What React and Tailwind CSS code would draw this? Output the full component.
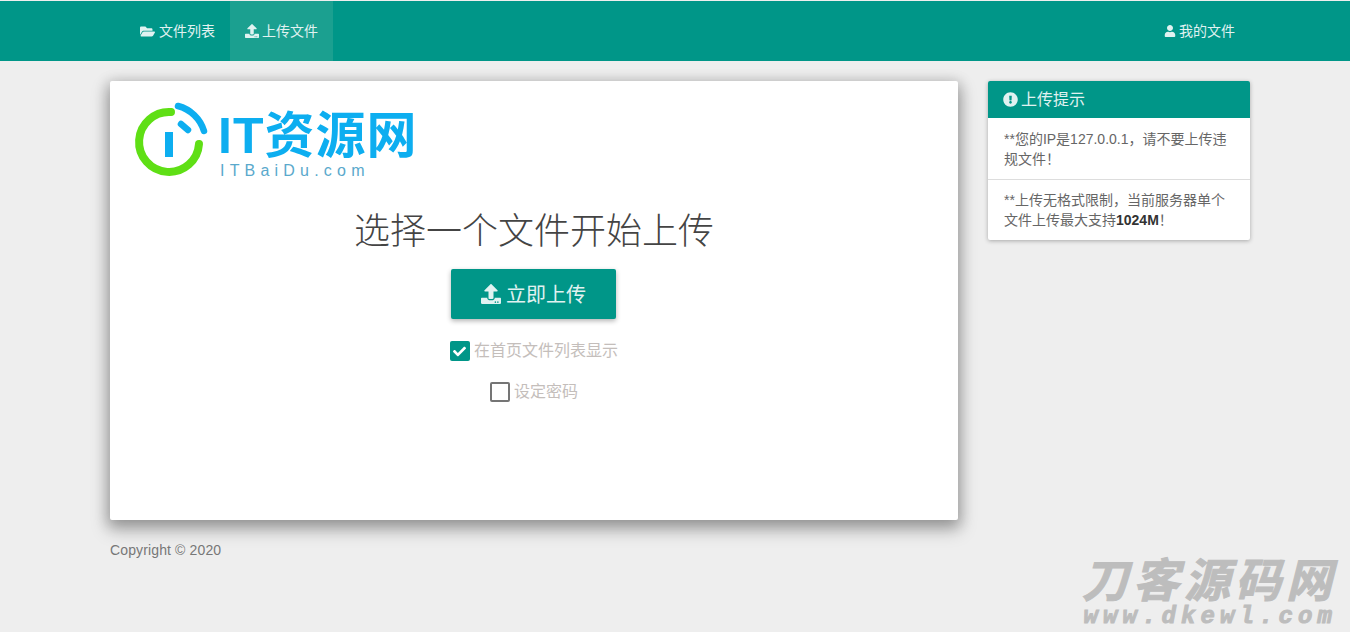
import { FaFolderOpen, FaUpload, FaUser, FaExclamationCircle, FaCheck } from 'react-icons/fa';

const sans = "font-['Liberation_Sans','Noto_Sans_CJK_SC',sans-serif]";

function Logo() {
  return (
    <div className="flex items-start h-[80px]">
      <svg width="80" height="80" viewBox="0 0 80 80" className="shrink-0">
        <path d="M41 15 A30 30 0 1 0 69 47" fill="none" stroke="#5fdf15" strokeWidth="8" strokeLinecap="round" />
        <path d="M48 9 A37 37 0 0 1 74 34" fill="none" stroke="#0daef0" strokeWidth="6.5" strokeLinecap="round" />
        <path d="M51 27 L58 33" fill="none" stroke="#0daef0" strokeWidth="6.5" strokeLinecap="round" />
        <rect x="35" y="35" width="8" height="25" fill="#0daef0" />
      </svg>
      <div className="ml-[8px] mt-[14px]">
        <div className={`${sans} text-[50px] leading-[50px] font-bold text-[#0daef0] tracking-[1px] whitespace-nowrap`}>IT资源网</div>
        <div className={`${sans} text-[16px] leading-[18px] text-[#5aa9cc] tracking-[5.2px] mt-[1px] ml-[2px]`}>ITBaiDu.com</div>
      </div>
    </div>
  );
}

function NavLink({ icon, label, active, gap }) {
  return (
    <a className={`flex items-center h-[60px] px-[15px] text-[14px] text-[#e0f2f1] ${active ? 'bg-[#1ba090]' : ''}`}>
      {icon}
      <span className={gap}>{label}</span>
    </a>
  );
}

export default function App() {
  return (
    <div className={`${sans} min-h-[632px] bg-[#eeeeee] pt-px relative overflow-hidden`}>
      {/* Navbar */}
      <nav className="h-[60px] bg-[#009688] flex justify-between pl-[125px] pr-[100px]">
        <div className="flex">
          <NavLink icon={<FaFolderOpen size={15} />} label="文件列表" gap="ml-[4px]" />
          <NavLink icon={<FaUpload size={14} />} label="上传文件" gap="ml-[3px]" active />
        </div>
        <NavLink icon={<FaUser size={12} />} label="我的文件" gap="ml-[3px]" />
      </nav>

      <div className="flex items-start gap-[30px] pl-[110px] pt-[20px]">
        {/* Main */}
        <div className="w-[848px]">
          <div className="h-[439px] bg-white rounded-[2px] shadow-[0_8px_17px_2px_rgba(0,0,0,0.25),0_3px_14px_2px_rgba(0,0,0,0.2)] pt-[16px] pl-[20px]">
            <Logo />
            <div className="-ml-[20px] flex flex-col items-center">
              <h1 className="text-[36px] leading-[40px] font-light text-[#444444] mt-[35px]">选择一个文件开始上传</h1>
              <button className="mt-[17px] mr-[1px] w-[165px] h-[50px] bg-[#009688] rounded-[2px] text-[20px] text-[#e0f2f1] flex items-center justify-center shadow-[0_2px_5px_rgba(0,0,0,0.3)]">
                <FaUpload size={20} />
                <span className="ml-[5px] mt-[1px]">立即上传</span>
              </button>
              <label className="mt-[21px] h-[22px] flex items-center text-[16px] text-[#c4bebb]">
                <span className="w-[20px] h-[20px] rounded-[2px] bg-[#009688] text-white flex items-center justify-center mr-[4px]">
                  <FaCheck size={13} />
                </span>
                在首页文件列表显示
              </label>
              <label className="mt-[19px] h-[22px] flex items-center text-[16px] text-[#c4bebb]">
                <span className="w-[20px] h-[20px] rounded-[2px] border-2 border-[#757575] mr-[4px]" />
                设定密码
              </label>
            </div>
          </div>
          <p className="mt-[21px] text-[14px] leading-[18px] tracking-[0.13px] text-[#777777]">Copyright © 2020</p>
        </div>

        {/* Sidebar */}
        <div className="w-[262px] rounded-[2px] bg-white shadow-[0_1px_4px_rgba(0,0,0,0.3)] overflow-hidden">
          <div className="h-[37px] bg-[#009688] text-[#e0f2f1] text-[16px] flex items-center px-[15px]">
            <FaExclamationCircle size={15} />
            <span className="ml-[3px]">上传提示</span>
          </div>
          <div className="px-[16px] pt-[11px] pb-[10px] text-[14px] leading-[20px] text-[#666666] border-b border-[#dddddd]">
            **您的IP是127.0.0.1，请不要上传违规文件！
          </div>
          <div className="px-[16px] py-[10px] text-[14px] leading-[20px] text-[#666666]">
            **上传无格式限制，当前服务器单个文件上传最大支持<b className="text-[#333333]">1024M</b>！
          </div>
        </div>
      </div>

      {/* Watermark */}
      <div className="absolute right-[13px] bottom-[3px] text-[#bdbdbd] italic font-bold text-right [-webkit-text-stroke:1px_#bdbdbd]">
        <div className="text-[46px] leading-[48px] tracking-[5px] whitespace-nowrap">刀客源码网</div>
        <div className="text-[24px] leading-[24px] tracking-[5.1px] font-['Liberation_Mono',monospace]">www.dkewl.com</div>
      </div>
    </div>
  );
}
